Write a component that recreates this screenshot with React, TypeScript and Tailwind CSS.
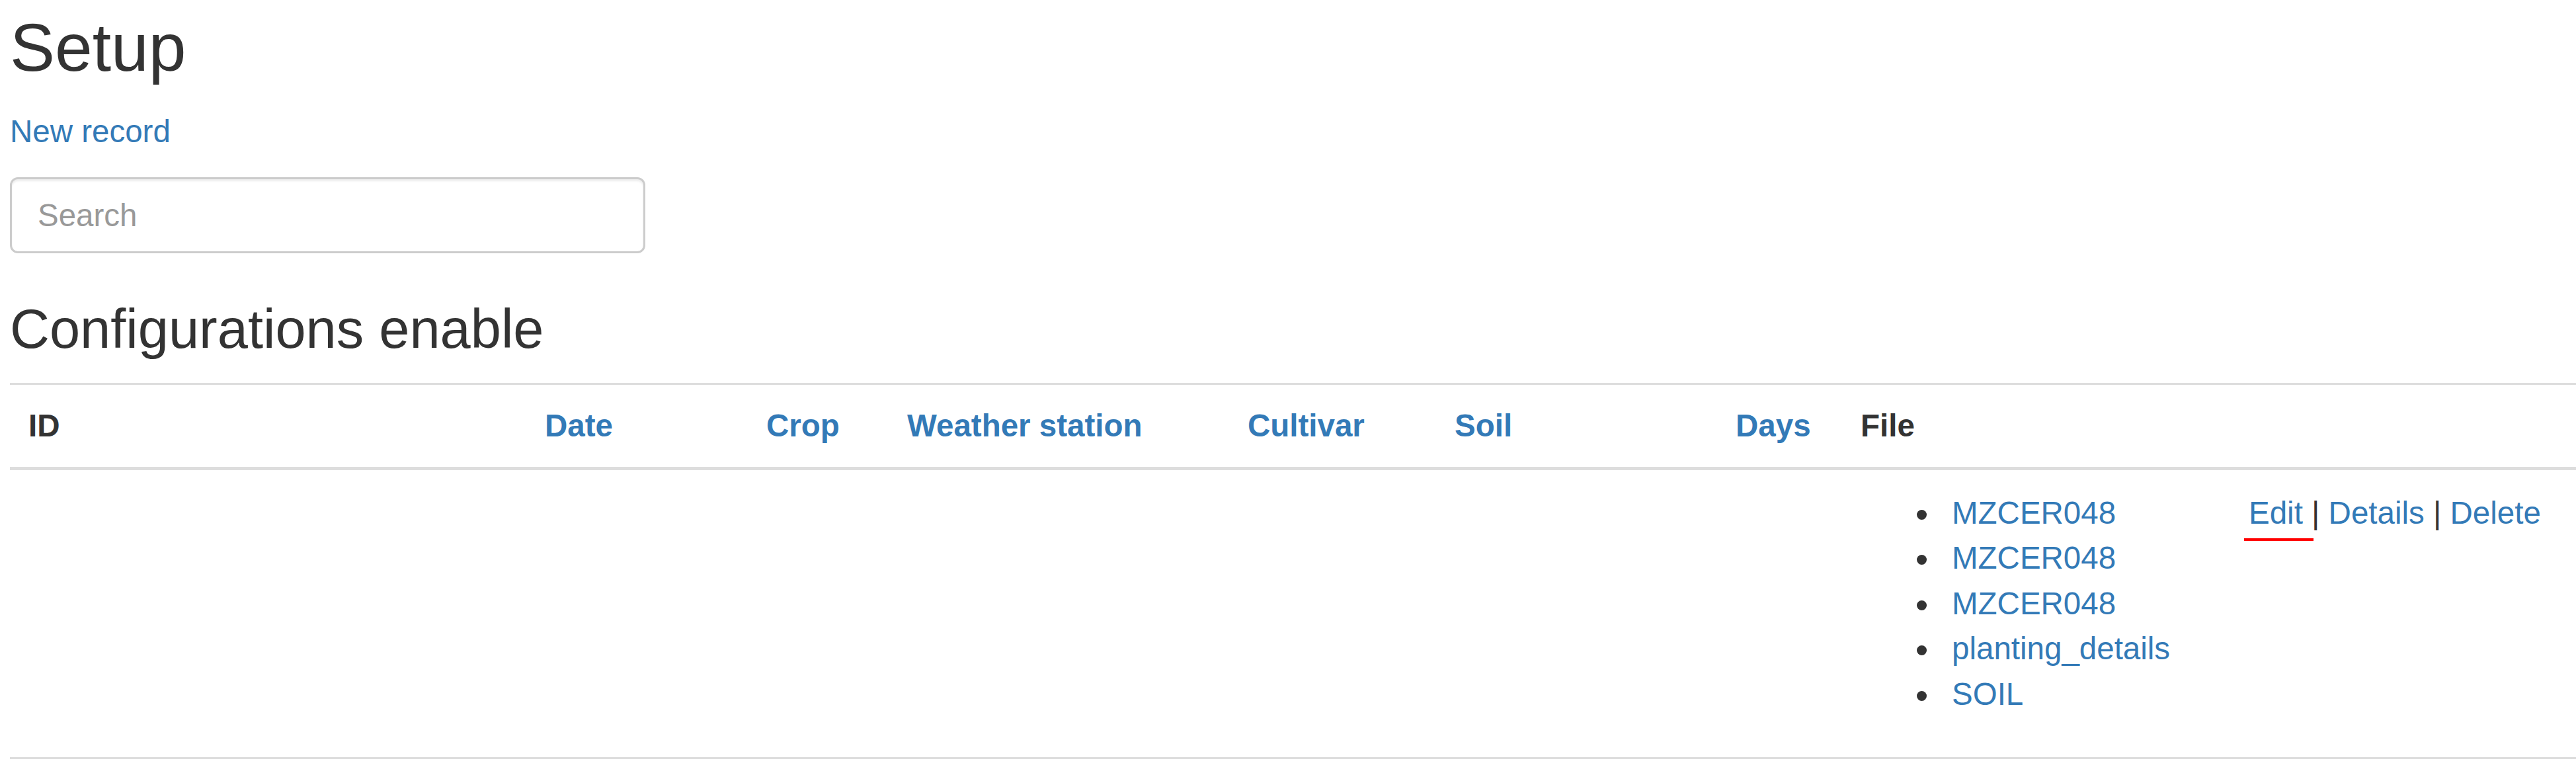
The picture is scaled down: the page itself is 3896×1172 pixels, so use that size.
import React from "react";

const columns = [
  { label: "ID", width: "w-[781px]", link: false },
  { label: "Date", width: "w-[335px]", link: true },
  { label: "Crop", width: "w-[213px]", link: true },
  { label: "Weather station", width: "w-[515px]", link: true },
  { label: "Cultivar", width: "w-[313px]", link: true },
  { label: "Soil", width: "w-[425px]", link: true },
  { label: "Days", width: "w-[189px]", link: true },
  { label: "File", width: "w-[587px]", link: false },
];

const files = ["MZCER048", "MZCER048", "MZCER048", "planting_details", "SOIL"];

const App: React.FC = () => {
  return (
    <div className="min-h-screen bg-white pl-[15px] pt-[17px] font-['Liberation_Sans',Arial,sans-serif] text-[#333]">
      <h1 className="text-[102px] font-normal leading-[111px]">Setup</h1>

      <p className="mt-[37px] text-[47.5px] leading-[68.5px]">
        <a href="#" className="text-[#337ab7]">
          New record
        </a>
      </p>

      <input
        type="text"
        placeholder="Search"
        className="mt-[34px] block h-[115px] w-[961px] rounded-[12px] border-[3px] border-[#ccc] px-[39px] text-[47.5px] text-[#555] shadow-[inset_0_3px_3px_rgba(0,0,0,0.075)] outline-none placeholder:text-[#999]"
      />

      <h2 className="mt-[70px] text-[83px] font-normal leading-[90px]">Configurations enable</h2>

      {/* Table */}
      <table className="mt-[36px] w-full table-fixed border-separate border-spacing-0 text-[47.5px] leading-[68.5px]">
        <colgroup>
          {columns.map((c) => (
            <col key={c.label} className={c.width} />
          ))}
          <col />
        </colgroup>
        <thead>
          <tr>
            {columns.map((c) => (
              <th
                key={c.label}
                className="border-t-[3px] border-b-[5px] border-[#ddd] px-[28px] pt-[28px] pb-[27.5px] text-left align-bottom font-bold"
              >
                {c.link ? (
                  <a href="#" className="text-[#337ab7]">
                    {c.label}
                  </a>
                ) : (
                  c.label
                )}
              </th>
            ))}
            <th className="border-t-[3px] border-b-[5px] border-[#ddd] px-[28px] pt-[28px] pb-[27.5px]"></th>
          </tr>
        </thead>
        <tbody>
          <tr>
            {columns.slice(0, 7).map((c) => (
              <td key={c.label} className="border-b-[3px] border-[#ddd] px-[28px] pt-[31px] pb-[28px] align-top"></td>
            ))}
            <td className="border-b-[3px] border-[#ddd] px-[28px] pt-[31px] pb-[28px] align-top">
              <ul className="mb-[33px] pl-[85px]">
                {files.map((f, i) => (
                  <li key={i} className="flex items-start gap-[38px]">
                    <span className="mt-[29px] h-[15px] w-[15px] shrink-0 rounded-full bg-[#333]" />
                    <a href="#" className="text-[#337ab7]">
                      {f}
                    </a>
                  </li>
                ))}
              </ul>
            </td>
            <td className="border-b-[3px] border-[#ddd] px-[28px] pt-[31px] pb-[28px] align-top whitespace-nowrap">
              <span className="relative inline-block">
                <a href="#" className="text-[#337ab7]">
                  Edit
                </a>
                {/* red annotation mark */}
                <span className="absolute top-[72px] left-[-7px] h-[4px] w-[105px] bg-[#ff0000]" />
              </span>{" "}
              |{" "}
              <a href="#" className="text-[#337ab7]">
                Details
              </a>{" "}
              |{" "}
              <a href="#" className="text-[#337ab7]">
                Delete
              </a>
            </td>
          </tr>
        </tbody>
      </table>
    </div>
  );
};

export default App;
